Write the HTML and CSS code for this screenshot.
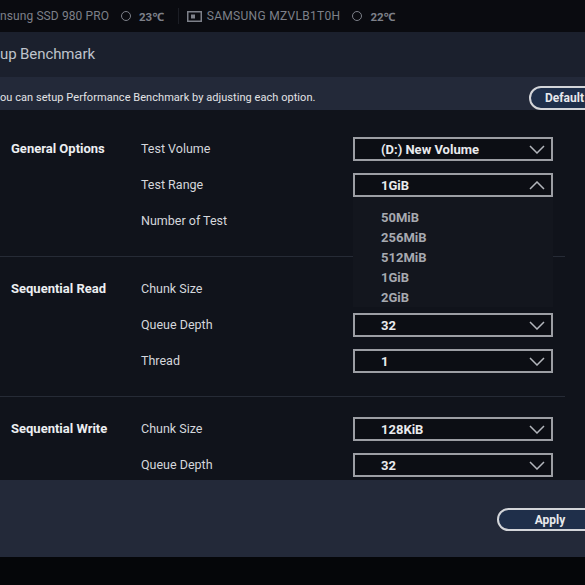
FILE: index.html
```html
<!DOCTYPE html>
<html>
<head>
<meta charset="utf-8">
<link rel="stylesheet" href="styles.css">
</head>
<body>
<div class="screen">
  <div class="topbar">
    <span class="drive-name">nsung SSD 980 PRO</span>
    <span class="temp-icon"></span>
    <span class="temp">23℃</span>
    <span class="vsep"></span>
    <svg class="drive-icon" width="15" height="11" viewBox="0 0 15 11"><rect x="0.75" y="0.75" width="13.5" height="9.5" fill="none" stroke="#7d8089" stroke-width="1.5"/><rect x="4" y="3.5" width="4" height="4" fill="#7d8089"/></svg>
    <span class="drive-name upper">SAMSUNG MZVLB1T0H</span>
    <span class="temp-icon"></span>
    <span class="temp">22℃</span>
  </div>
  <div class="window">
    <div class="win-header">up Benchmark</div>
    <div class="desc-bar">
      <span class="desc">ou can setup Performance Benchmark by adjusting each option.</span>
      <button class="pill default-btn">Default</button>
    </div>
    <div class="content">
      <div class="section">
        <div class="sec-title">General Options</div>
        <div class="rows">
          <div class="row"><span class="label">Test Volume</span><div class="select"><span>(D:) New Volume</span><svg class="chev" width="16" height="9" viewBox="0 0 16 9"><polyline points="1,1 8,8 15,1" fill="none" stroke="#b3b6bc" stroke-width="1.5"/></svg></div></div>
          <div class="row"><span class="label">Test Range</span>
            <div class="select-wrap">
              <div class="select"><span>1GiB</span><svg class="chev" width="16" height="9" viewBox="0 0 16 9"><polyline points="1,8 8,1 15,8" fill="none" stroke="#b3b6bc" stroke-width="1.5"/></svg></div>
              <ul class="menu">
                <li>50MiB</li>
                <li>256MiB</li>
                <li>512MiB</li>
                <li>1GiB</li>
                <li>2GiB</li>
              </ul>
            </div>
          </div>
          <div class="row"><span class="label">Number of Test</span></div>
        </div>
      </div>
      <div class="section">
        <div class="sec-title">Sequential Read</div>
        <div class="rows">
          <div class="row"><span class="label">Chunk Size</span></div>
          <div class="row"><span class="label">Queue Depth</span><div class="select"><span>32</span><svg class="chev" width="16" height="9" viewBox="0 0 16 9"><polyline points="1,1 8,8 15,1" fill="none" stroke="#b3b6bc" stroke-width="1.5"/></svg></div></div>
          <div class="row"><span class="label">Thread</span><div class="select"><span>1</span><svg class="chev" width="16" height="9" viewBox="0 0 16 9"><polyline points="1,1 8,8 15,1" fill="none" stroke="#b3b6bc" stroke-width="1.5"/></svg></div></div>
        </div>
      </div>
      <div class="section last">
        <div class="sec-title">Sequential Write</div>
        <div class="rows">
          <div class="row"><span class="label">Chunk Size</span><div class="select"><span>128KiB</span><svg class="chev" width="16" height="9" viewBox="0 0 16 9"><polyline points="1,1 8,8 15,1" fill="none" stroke="#b3b6bc" stroke-width="1.5"/></svg></div></div>
          <div class="row"><span class="label">Queue Depth</span><div class="select"><span>32</span><svg class="chev" width="16" height="9" viewBox="0 0 16 9"><polyline points="1,1 8,8 15,1" fill="none" stroke="#b3b6bc" stroke-width="1.5"/></svg></div></div>
        </div>
      </div>
    </div>
    <div class="footer">
      <button class="pill apply-btn">Apply</button>
    </div>
  </div>
</div>
</body>
</html>
```
FILE: styles.css
```css
* { box-sizing: border-box; }
html, body {
  margin: 0;
  padding: 0;
  background: #050609;
  font-family: Roboto, "Noto Sans", sans-serif;
}
.screen {
  width: 585px;
  height: 585px;
  overflow: hidden;
  background: #050609;
}
.topbar {
  height: 32px;
  background: #0a0b10;
  display: flex;
  align-items: center;
  color: #7d8089;
  font-size: 12px;
  white-space: nowrap;
}
.drive-name { letter-spacing: 0.1px; }
.drive-name.upper { letter-spacing: 0.3px; margin-left: 5px; }
.temp-icon {
  width: 10px;
  height: 10px;
  border: 1.5px solid #7d8089;
  border-radius: 50%;
  margin-left: 12px;
}
.temp {
  font-weight: 700;
  margin-left: 8px;
  font-size: 11.5px;
}
.vsep {
  width: 1px;
  height: 16px;
  background: #1c1e25;
  margin-left: 14px;
  margin-right: 8px;
}
.window {
  width: 585px;
}
.win-header {
  height: 45px;
  background: #1b202d;
  color: #bfc3cb;
  font-size: 15px;
  display: flex;
  align-items: center;
  padding-bottom: 2px;
  letter-spacing: -0.1px;
}
.desc-bar {
  height: 33px;
  background: #232939;
  display: flex;
  align-items: center;
  justify-content: space-between;
  overflow: hidden;
}
.desc {
  color: #e2e3e6;
  font-size: 11px;
  padding-top: 8px;
  letter-spacing: 0.05px;
}
.pill {
  font-family: Roboto, "Noto Sans", sans-serif;
  font-weight: 700;
  font-size: 12px;
  color: #e8e9ec;
  background: #1f2f4a;
  border: 2px solid #d3d5d9;
  border-radius: 13px;
  height: 24px;
  padding: 0;
  flex-shrink: 0;
}
.default-btn {
  width: 80px;
  margin-right: -24px;
  margin-top: 9px;
  text-align: left;
  padding-left: 14px;
}
.content {
  height: 370px;
  background: #10131b;
  padding-top: 7px;
}
.section {
  display: flex;
  width: 565px;
  padding: 14px 0 17px 0;
  border-bottom: 1px solid #262b36;
}
.section.last { border-bottom: none; }
.sec-title {
  width: 141px;
  padding-left: 11px;
  padding-top: 10px;
  color: #eceef1;
  font-weight: 700;
  font-size: 13px;
}
.rows { display: flex; flex-direction: column; }
.row {
  height: 36px;
  display: flex;
  align-items: center;
}
.label {
  width: 212px;
  color: #d5d7dc;
  font-size: 12.5px;
  padding-bottom: 2px;
}
.select-wrap { position: relative; }
.select {
  width: 200px;
  height: 24px;
  border: 2px solid #9c9ea4;
  background: #0c0e14;
  display: flex;
  align-items: center;
  justify-content: space-between;
  padding-left: 26px;
  padding-right: 6px;
  color: #e9eaed;
  font-weight: 700;
  font-size: 13px;
}
.menu {
  position: absolute;
  left: 0;
  top: 24px;
  width: 200px;
  height: 110px;
  margin: 0;
  padding: 11px 0 0 28px;
  list-style: none;
  background: #13161e;
  z-index: 2;
}
.menu li {
  height: 20px;
  line-height: 20px;
  color: #a6a9b0;
  font-weight: 700;
  font-size: 13px;
}
.footer {
  height: 77px;
  background: #232939;
  display: flex;
  align-items: center;
  padding-left: 497px;
  padding-top: 2px;
}
.apply-btn {
  width: 106px;
  height: 23px;
  text-align: center;
}
```
